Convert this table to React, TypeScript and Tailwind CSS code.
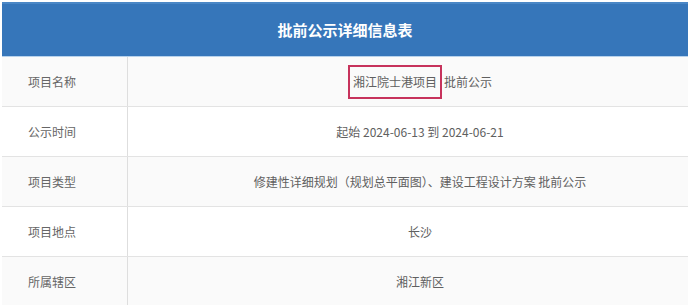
const rows: { label: string; value: React.ReactNode; striped: boolean }[] = [
  {
    label: "项目名称",
    value: (
      <span className="inline-flex items-center">
        <span className="border-2 border-[#c7335c] px-[3px] py-[8px] leading-[14px]">
          湘江院士港项目
        </span>
        <span className="ml-[2px]">批前公示</span>
      </span>
    ),
    striped: true,
  },
  { label: "公示时间", value: "起始 2024-06-13 到 2024-06-21", striped: false },
  {
    label: "项目类型",
    value: "修建性详细规划（规划总平面图）、建设工程设计方案 批前公示",
    striped: true,
  },
  { label: "项目地点", value: "长沙", striped: false },
  { label: "所属辖区", value: "湘江新区", striped: true },
];

export default function App() {
  return (
    <div
      className="w-[692px] h-[305px] overflow-hidden bg-white pl-[2px] pt-[2px]"
      style={{ fontFamily: '"Noto Sans CJK SC", "Noto Sans", sans-serif' }}
    >
      <div className="w-[686px]">
        <div className="h-[55px] flex items-center justify-center bg-[#3676ba] border-t-2 border-t-[#4a87c6] border-b border-b-[#b7d2ec]">
          <span className="text-[15px] font-bold text-white">批前公示详细信息表</span>
        </div>
        {rows.map((row) => (
          <div
            key={row.label}
            className={`flex h-[50px] border-b-[1.5px] border-[#e3e3e3] ${
              row.striped ? "bg-[#fafafa]" : "bg-white"
            }`}
          >
            <div className="w-[126px] shrink-0 flex items-center pl-[26px] border-r border-[#dedede] text-[12px] text-[#666]">
              {row.label}
            </div>
            <div className="flex-1 flex items-center justify-center pl-[24px] text-[12px] text-[#606060]">
              {row.value}
            </div>
          </div>
        ))}
      </div>
    </div>
  );
}
